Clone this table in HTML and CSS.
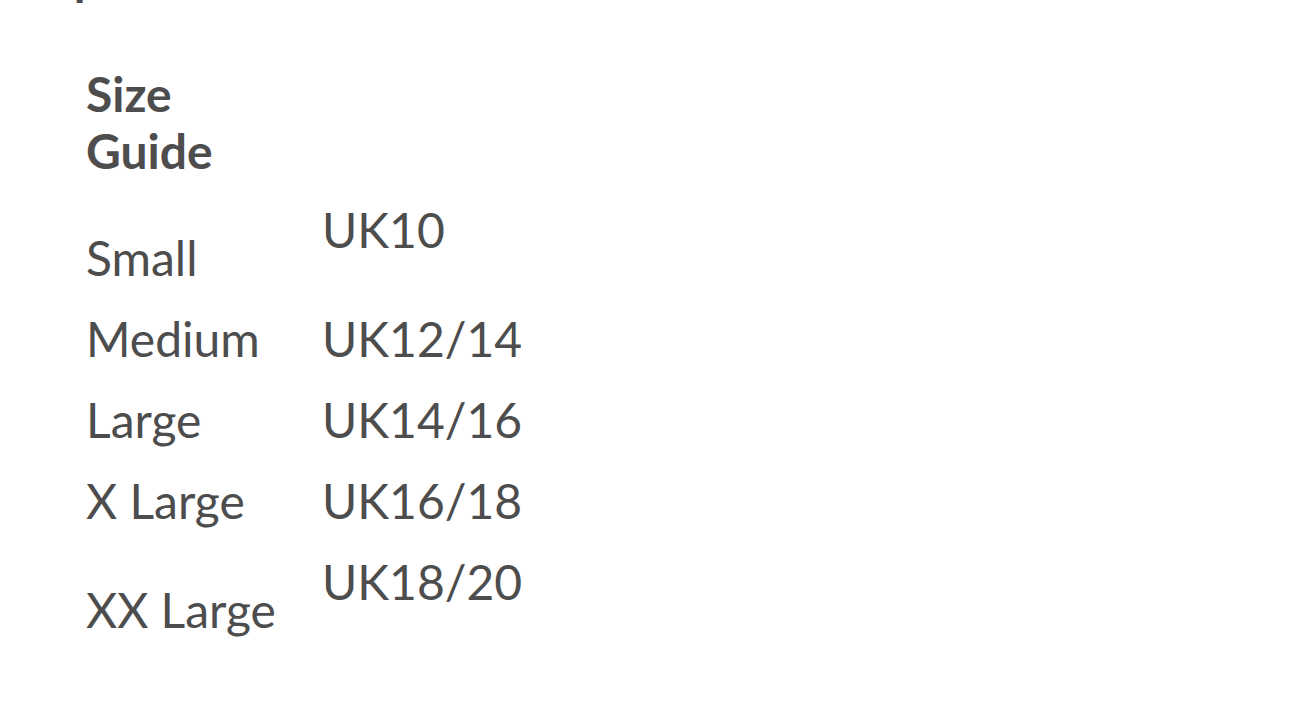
FILE: index.html
```html
<!DOCTYPE html>
<html lang="en">
<head>
<meta charset="utf-8">
<title>Size Guide</title>
<link rel="stylesheet" href="styles.css">
</head>
<body>
<div class="page">
  <h2 class="section-title">Specification</h2>
  <table class="size-table">
    <colgroup><col class="col-size"><col class="col-uk"></colgroup>
    <thead>
      <tr><th><span class="head-text">Size Guide</span></th><th></th></tr>
    </thead>
    <tbody>
      <tr class="offset-row"><td class="size-cell">Small</td><td class="uk-cell">UK10</td></tr>
      <tr><td>Medium</td><td>UK12/14</td></tr>
      <tr><td>Large</td><td>UK14/16</td></tr>
      <tr><td>X Large</td><td>UK16/18</td></tr>
      <tr class="offset-row"><td class="size-cell">XX Large</td><td class="uk-cell">UK18/20</td></tr>
    </tbody>
  </table>
</div>
</body>
</html>
```
FILE: styles.css
```css
html, body {
  margin: 0;
  padding: 0;
  background: #ffffff;
}
body {
  font-family: Lato, "Liberation Sans", sans-serif;
  color: #4d4d4d;
  font-size: 48px;
  line-height: 1.2;
}
.page {
  padding: 0 0 0 48px;
}
.section-title {
  font-size: 48px;
  font-weight: 700;
  line-height: 1.2;
  margin: -52px 0 0 0;
}
.size-table {
  border-collapse: collapse;
  border-spacing: 0;
  table-layout: fixed;
  width: 480px;
  margin: 51px 0 0 38px;
}
.col-size {
  width: 236px;
}
.col-uk {
  width: 244px;
}
.size-table th {
  font-weight: 700;
  text-align: left;
  vertical-align: bottom;
  padding: 8px 0 10px 0;
}
.head-text {
  display: inline-block;
  width: min-content;
}
.size-table td {
  padding: 11.7px 0;
  vertical-align: baseline;
  white-space: nowrap;
}
.offset-row td {
  vertical-align: top;
}
.offset-row .size-cell {
  padding-top: 39.7px;
}
```
